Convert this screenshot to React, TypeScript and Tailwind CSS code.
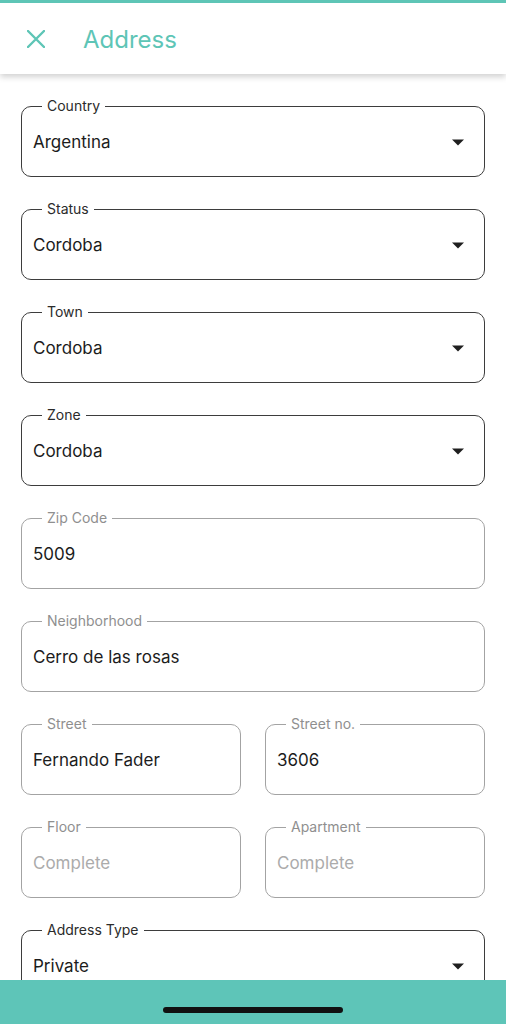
import React from 'react';

type Field = {
  label: string;
  value?: string;
  select?: boolean;
  muted?: boolean;
};

const rows: Field[][] = [
  [{ label: 'Country', value: 'Argentina', select: true }],
  [{ label: 'Status', value: 'Cordoba', select: true }],
  [{ label: 'Town', value: 'Cordoba', select: true }],
  [{ label: 'Zone', value: 'Cordoba', select: true }],
  [{ label: 'Zip Code', value: '5009', muted: true }],
  [{ label: 'Neighborhood', value: 'Cerro de las rosas', muted: true }],
  [
    { label: 'Street', value: 'Fernando Fader', muted: true },
    { label: 'Street no.', value: '3606', muted: true },
  ],
  [
    { label: 'Floor', muted: true },
    { label: 'Apartment', muted: true },
  ],
  [{ label: 'Address Type', value: 'Private', select: true }],
];

function Caret() {
  return (
    <svg width="12" height="7" viewBox="0 0 12 7" className="shrink-0">
      <path d="M0 0.5 L12 0.5 L6 6.5 Z" fill="#1f1f1f" />
    </svg>
  );
}

function OutlinedField({ field }: { field: Field }) {
  const borderColor = field.muted ? 'border-[#a3a3a3]' : 'border-[#3d3d3d]';
  const labelColor = field.muted ? 'text-[#8f8f8f]' : 'text-[#2b2b2b]';
  return (
    <fieldset className={`flex-1 min-w-0 border ${borderColor} rounded-[10px] pl-[20px] pr-[20px]`}>
      <legend className={`px-[5px] text-[14px] leading-[16px] ${labelColor}`}>{field.label}</legend>
      <div className="h-[62px] -ml-[9px] pt-[17px] flex items-start justify-between">
        {field.value ? (
          <span className="text-[17px] leading-[22px] text-[#1c1c1c]">{field.value}</span>
        ) : (
          <span className="text-[17px] leading-[22px] text-[#ababab]">Complete</span>
        )}
        {field.select && (
          <div className="h-[22px] flex items-center">
            <Caret />
          </div>
        )}
      </div>
    </fieldset>
  );
}

export default function App() {
  return (
    <div className="h-screen w-full flex flex-col bg-white overflow-hidden" style={{ fontFamily: 'Inter, "Noto Sans", sans-serif' }}>
      <header className="relative z-10 bg-white border-t-[3px] border-[#5ec5b6] shadow-[0_3px_6px_rgba(0,0,0,0.18)]">
        <div className="h-[71px] flex items-center px-[27px] gap-[38px]">
          <svg width="18" height="18" viewBox="0 0 18 18" className="mt-[1px]">
            <path d="M1 1 L17 17 M17 1 L1 17" stroke="#5ec5b6" strokeWidth="2.4" strokeLinecap="round" />
          </svg>
          <h1 className="text-[24px] leading-[28px] text-[#5ec5b6] mt-[2px]">Address</h1>
        </div>
      </header>

      <main className="flex-1 overflow-hidden px-[21px] pt-[24px] flex flex-col gap-[24px]">
        {rows.map((row, i) => (
          <div key={i} className="flex gap-[24px]">
            {row.map((f) => (
              <OutlinedField key={f.label} field={f} />
            ))}
          </div>
        ))}
      </main>

      <div className="h-[44px] shrink-0 bg-[#5ec5b8] flex justify-center">
        <div className="mt-[27px] w-[180px] h-[6px] rounded-full bg-[#111]" />
      </div>
    </div>
  );
}
